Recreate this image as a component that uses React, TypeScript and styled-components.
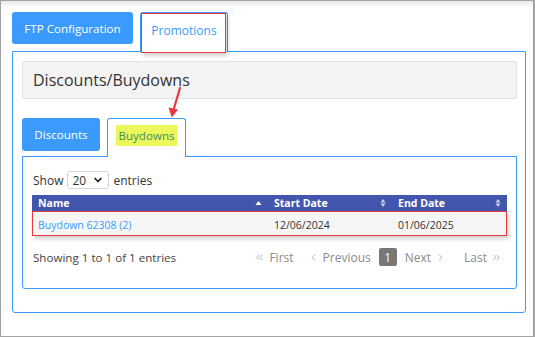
import styled, { createGlobalStyle } from 'styled-components';
import { ChevronDown, ChevronLeft, ChevronRight, ChevronsLeft, ChevronsRight } from 'lucide-react';

const GlobalStyle = createGlobalStyle`
    html, body {
        margin: 0;
        padding: 0;
        overflow: hidden;
        background: #ffffff;
    }
    body {
        font-family: "Open Sans", "Liberation Sans", sans-serif;
        color: #333333;
    }
`;

const BLUE = '#3a9bfc';

const SortUp = () => (
    <svg width="7" height="6" viewBox="0 0 7 6">
        <path d="M0.5 5 L3.5 1 L6.5 5 Z" fill="#ffffff" />
    </svg>
);

const SortBoth = () => (
    <svg width="6" height="10" viewBox="0 0 6 10">
        <path d="M0.5 4.5 L3 1 L5.5 4.5 Z" fill="#c9d0ea" />
        <path d="M0.5 5.5 L3 9 L5.5 5.5 Z" fill="#c9d0ea" />
    </svg>
);

const App = () => {
    return (
        <>
            <GlobalStyle />
            <Frame>
                <TabBar>
                    <TabButton>FTP Configuration</TabButton>
                    <ActiveTab>
                        Promotions
                        <Callout />
                    </ActiveTab>
                </TabBar>
                <Panel>
                    <Heading>Discounts/Buydowns</Heading>
                    <SubTabBar>
                        <SubTabButton>Discounts</SubTabButton>
                        <SubActiveTab>
                            <Marked>Buydowns</Marked>
                        </SubActiveTab>
                    </SubTabBar>
                    <InnerPanel>
                        <LengthRow>
                            Show
                            <Select>
                                20
                                <ChevronDown size={12} strokeWidth={3.5} color="#222" />
                            </Select>
                            entries
                        </LengthRow>
                        <Table>
                            <thead>
                                <tr>
                                    <Th $w={236}>Name<SortSlot><SortUp /></SortSlot></Th>
                                    <Th $w={124}>Start Date<SortSlot><SortBoth /></SortSlot></Th>
                                    <Th>End Date<SortSlot><SortBoth /></SortSlot></Th>
                                </tr>
                            </thead>
                            <tbody>
                                <Row>
                                    <Td><Link>Buydown 62308 (2)</Link></Td>
                                    <Td>12/06/2024</Td>
                                    <Td>01/06/2025</Td>
                                </Row>
                            </tbody>
                        </Table>
                        <Footer>
                            <Info>Showing 1 to 1 of 1 entries</Info>
                            <Pager>
                                <PageLink $after={6}><ChevronsLeft size={11} strokeWidth={1.5} />First</PageLink>
                                <PageLink><ChevronLeft size={11} strokeWidth={1.5} />Previous</PageLink>
                                <CurrentPage>1</CurrentPage>
                                <PageLink>Next<ChevronRight size={11} strokeWidth={1.5} /></PageLink>
                                <PageLink $before={10}>Last<ChevronsRight size={11} strokeWidth={1.5} /></PageLink>
                            </Pager>
                        </Footer>
                    </InnerPanel>
                </Panel>
                <Arrow width="20" height="34" viewBox="0 0 20 34">
                    <path d="M14 2 L7.5 24" stroke="#e8383d" strokeWidth="2.2" strokeLinecap="round" />
                    <path d="M2.5 21.5 L5.8 31.5 L12 23.5 Z" fill="#e8383d" />
                </Arrow>
            </Frame>
        </>
    );
};

const Frame = styled.div`
    position: relative;
    box-sizing: border-box;
    width: 535px;
    height: 337px;
    padding: 11px 8px 0 11px;
    border: 1px solid #a3a3a3;
    border-right-width: 2px;
    box-shadow: inset 0 4px 6px -2px rgba(0, 0, 0, 0.12);
    background: #ffffff;
`;

const TabBar = styled.div`
    display: flex;
    align-items: flex-start;
    gap: 7px;
    position: relative;
    z-index: 1;
`;

const TabButton = styled.div`
    display: flex;
    align-items: center;
    justify-content: center;
    width: 121px;
    height: 32px;
    border-radius: 3px;
    background: ${BLUE};
    color: #ffffff;
    font-size: 11.6px;
`;

const ActiveTab = styled.div`
    position: relative;
    display: flex;
    align-items: center;
    justify-content: center;
    box-sizing: border-box;
    width: 88px;
    height: 40px;
    padding-bottom: 4px;
    border: 1px solid ${BLUE};
    border-bottom: none;
    border-radius: 3px 3px 0 0;
    background: #ffffff;
    color: ${BLUE};
    font-size: 12px;
`;

const Callout = styled.div`
    position: absolute;
    left: 0;
    top: 0;
    width: 85px;
    height: 40px;
    box-sizing: border-box;
    border: 1.5px solid #e8383d;
    box-shadow: 2px 3px 4px rgba(0, 0, 0, 0.18);
`;

const Panel = styled.div`
    box-sizing: border-box;
    width: 514px;
    height: 262px;
    margin-top: -1px;
    padding: 9px 8px 0 9px;
    border: 1px solid ${BLUE};
    border-radius: 0 0 3px 3px;
`;

const Heading = styled.div`
    display: flex;
    align-items: center;
    box-sizing: border-box;
    height: 38px;
    padding-left: 10px;
    border: 1px solid #e2e2e2;
    border-radius: 3px;
    background: #f3f3f3;
    color: #333333;
    font-size: 16px;
`;

const SubTabBar = styled.div`
    display: flex;
    align-items: flex-start;
    gap: 7px;
    margin-top: 19px;
    position: relative;
    z-index: 1;
`;

const SubTabButton = styled(TabButton)`
    width: 78px;
    height: 33px;
    font-size: 11.6px;
`;

const SubActiveTab = styled(ActiveTab)`
    width: 79px;
    height: 39px;
    padding-bottom: 5px;
    font-size: 11.6px;
`;

const Marked = styled.span`
    padding: 3px 2px;
    background: #ecf75c;
    color: #3c8f64;
`;

const InnerPanel = styled.div`
    box-sizing: border-box;
    height: 133px;
    margin-top: -1px;
    padding: 14px 9px 0 9px;
    border: 1px solid ${BLUE};
    border-radius: 0 0 3px 3px;
`;

const LengthRow = styled.div`
    display: flex;
    align-items: center;
    gap: 4px;
    height: 18px;
    padding-left: 1px;
    font-size: 12px;
    color: #333333;
`;

const Select = styled.div`
    display: flex;
    align-items: center;
    justify-content: space-between;
    box-sizing: border-box;
    width: 42px;
    height: 18px;
    padding: 0 4px 0 4px;
    border: 1px solid #d4d4d4;
    border-radius: 3px;
    font-size: 12px;
`;

const Table = styled.table`
    width: 100%;
    margin-top: 6px;
    border-collapse: collapse;
    font-size: 10.5px;
`;

const Th = styled.th<{ $w?: number }>`
    position: relative;
    box-sizing: border-box;
    width: ${({ $w }) => ($w ? `${$w}px` : 'auto')};
    height: 16px;
    padding: 0 6px;
    background: #4356ad;
    color: #ffffff;
    font-weight: 700;
    text-align: left;
`;

const SortSlot = styled.span`
    position: absolute;
    right: 6px;
    top: 50%;
    transform: translateY(-50%);
    display: flex;
`;

const Row = styled.tr`
    background: #f6f6f6;
    outline: 1.5px solid #e8383d;
    outline-offset: -1px;
    box-shadow: 2px 3px 4px rgba(0, 0, 0, 0.18);
`;

const Td = styled.td`
    height: 23px;
    padding: 2px 6px 0 6px;
    color: #333333;
`;

const Link = styled.span`
    color: ${BLUE};
`;

const Footer = styled.div`
    display: flex;
    align-items: center;
    justify-content: space-between;
    margin-top: 12px;
    padding: 0 5px 0 1px;
`;

const Info = styled.div`
    font-size: 11.6px;
    color: #444444;
`;

const Pager = styled.div`
    display: flex;
    align-items: center;
    gap: 8px;
    font-size: 12px;
    color: #8a8a8a;
`;

const PageLink = styled.div<{ $before?: number; $after?: number }>`
    display: flex;
    align-items: center;
    gap: 4px;
    margin-left: ${({ $before }) => $before ?? 0}px;
    margin-right: ${({ $after }) => $after ?? 0}px;
    color: #8a8a8a;
`;

const CurrentPage = styled.div`
    display: flex;
    align-items: center;
    justify-content: center;
    width: 18px;
    height: 18px;
    border-radius: 2px;
    background: #777777;
    color: #ffffff;
    font-size: 12px;
`;

const Arrow = styled.svg`
    position: absolute;
    left: 165px;
    top: 85px;
`;

export default App;
